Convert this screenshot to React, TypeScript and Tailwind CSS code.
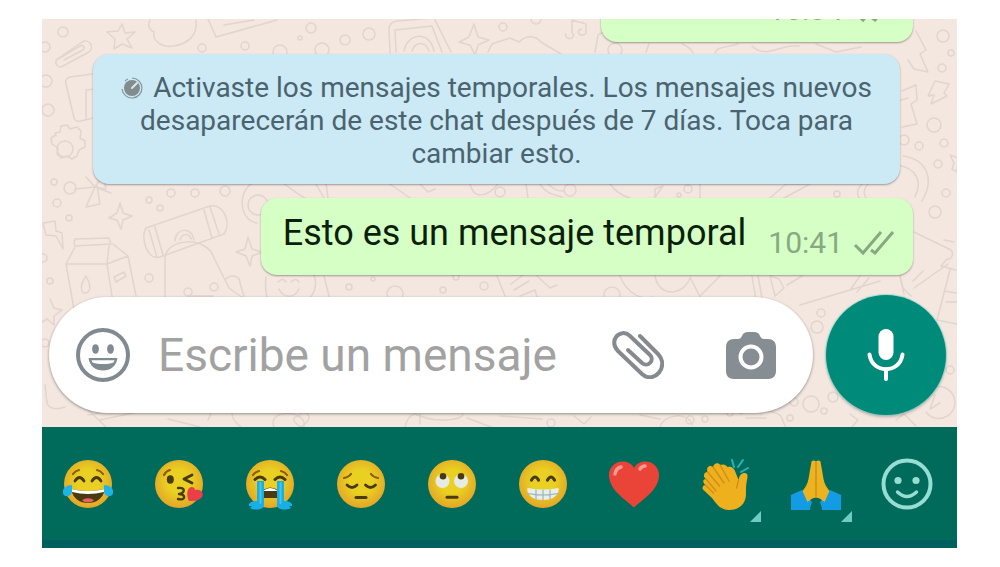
import type { ReactNode } from "react";

const roboto = "font-[Roboto,'Noto_Sans',sans-serif]";

function Wallpaper() {
  return (
    <svg
      className="absolute inset-0 h-full w-full"
      viewBox="42 19 915 408"
      preserveAspectRatio="xMidYMid slice"
      fill="none"
      stroke="#e2d4ce"
      strokeWidth="1.5"
      strokeLinecap="round"
      strokeLinejoin="round"
      aria-hidden="true"
    >
      {/* small circles */}
      {[
        [63, 32, 5], [45, 47, 5], [46, 81, 6], [48, 110, 6], [54, 182, 3], [70, 188, 6], [57, 203, 4], [69, 218, 3],
        [171, 193, 4], [149, 200, 3], [195, 193, 4], [225, 191, 5], [160, 208, 3], [43, 258, 4], [50, 281, 3],
        [149, 278, 4], [188, 292, 4], [214, 287, 4], [202, 48, 4], [245, 46, 4], [300, 38, 2], [311, 28, 5],
        [345, 40, 5], [369, 34, 6], [503, 27, 4], [536, 19, 5], [322, 50, 7], [280, 52, 7], [615, 50, 7],
        [943, 36, 6], [951, 53, 3], [942, 68, 4], [934, 125, 7], [944, 143, 4], [919, 146, 4], [904, 140, 5],
        [938, 164, 4], [946, 193, 4], [935, 212, 6], [688, 189, 4], [679, 195, 2], [837, 194, 3], [500, 192, 5],
        [570, 190, 6], [349, 287, 3], [373, 279, 2], [443, 290, 3], [484, 286, 4], [456, 277, 3], [395, 294, 8],
        [612, 295, 8], [821, 313, 4], [817, 327, 6], [45, 343, 4], [811, 404, 8], [794, 402, 4], [833, 397, 5],
        [705, 419, 3], [730, 413, 3], [824, 411, 3], [950, 370, 4], [551, 423, 4], [790, 418, 3], [690, 420, 4],
      ].map(([x, y, r]) => (
        <circle key={`${x}-${y}`} cx={x} cy={y} r={r} />
      ))}

      {/* top left: paper clip, star, mug, card */}
      <path d="M56 60l26-18c7-4 13 5 7 10L63 66c-5 3-10-3-5-7l22-13c3-2 6 2 3 4L64 60" />
      <path d="M122 24l3 9 10-1-8 7 5 9-10-4-8 5 1-10-8-7 11-1z" />
      <path d="M150 20c-3 6 0 10 4 12-2 9 8 16 20 14s24-9 22-26M208 19l8 18 61-17M224 25l30-5" />
      <path d="M100 73l-30 4c-4 1-5 4-4 7l8 34c1 3 4 4 7 3l16-4M96 89l-10 1v28" />
      <path d="M55 133l5-1 1-6 6-1 3 4 7-2 4 4-1 7 5 3 0 6-6 3-2 6-5 3-5-3-6 2-4-4 1-6-6-4-1-6 5-3z" />
      <circle cx="65" cy="149" r="8" />
      <path d="M86 177l9 10-20 2m20-2l16 6m-16-6l8-12 3 14zm0 0l-9 20 14-3-3-18" />
      <path d="M120 203l3 10 9 3-9 4-2 9-4-9-8-2 8-5zM248 237l4 12 10 3-10 4-2 10-4-10-10-4 9-3z" />

      {/* milk box */}
      <path d="M74 243l1-4 34-1 2 6-36 2zM75 247l-9 17 8 45M109 246l-2 18H66M107 264l21-8-15-12M107 264l6 38M128 256l8 40M86 276c-8 12-4 18 0 17s6-6 0-17zM114 277l10-5 2 4-10 6z" />
      <path d="M43 223l12-2 1 10 6 2 1 16-7-13-10-1z" />

      {/* scarf roll and backpack */}
      <path d="M146 228l64-22c13-3 22 16 14 28l-64 23c-13 4-20-20-14-29zM149 230l8 27M155 227l8 28M204 210l8 28M210 207l9 27" />
      <path d="M175 241c0-13 17-15 19-1M180 240c2-7 9-7 11-1M165 304V258c1-20 42-23 49 0l15 30 14 10M225 280c6-7 15-4 15 3l6 20M187 296h26" />
      <circle cx="258" cy="205" r="10" />
      <path d="M256 182c-18 4-19 38 1 41M282 182c8 6 15 12 23 16M316 184l8 14M326 183l2 15" />
      <path d="M266 277c-3 25 5 30 25 30s28-20 23-32M278 282q5-5 8 0M291 282q5-5 8 0M279 289c5 10 16 9 20 0M324 276l6 24" />

      {/* top middle: photo, sparkle, hat, notes */}
      <path d="M390 53l-1-24c0-5 3-7 8-8l37-3 17 34M396 52l-1-22 37-4 10 26M404 51c4-19 26-20 30 0M412 51c3-10 14-10 17 0" />
      <path d="M474 24l4 13 11 3-11 5-3 10-5-10-11-3 10-5zM488 52l4-8 18-6 9 4c8-8 17-6 22 0l20 12 2 7" />
      <path d="M566 34a4 3 0 1 0 6-1V20l14 4v7a4 3 0 1 1-4-2M595 52l3-17 14-8M646 52l3-8" />
      <path d="M682 44c6 2 9 5 11 9M738 44c-12 4-21 2-23 9M752 46c14 14 30-3 47 0M816 44l20 8 25-5" />

      {/* right side */}
      <path d="M916 31l10 19-6 4 8 18-14-3-6-9M935 81l14 3-5 9 3 3-16 8 3-9-6 1zM902 91l14-6 1 15-6 4 6 20-15 3M901 100l7-2" />
      <path d="M903 156c26 4 31 25 19 45M897 165c21 3 25 18 18 32M950 155l8 3-1 14-5-3 2-6z" />
      <path d="M862 184c-6 6-5 12-2 15M868 184c-5 6-4 11-2 14M770 198l16-14h24l-26 14M610 184c6 8 12 12 20 14M655 197l8-11-8 3zM700 184v14M390 184l20 14M470 184c4 16 17 13 28 0M526 184l2 14M540 184c5 8 10 10 22 13M548 184c6 5 9 7 15 7M420 184l8 8 7-3" />
      <path d="M914 232l37 18c3 3 1 10-4 9l-6 7 15 4M944 240l10 2M950 270l-13 50 20 4M944 291l12 2M946 302h11M913 281l10-10M914 288l34-24M900 276l3 12 8 8" />

      {/* strip between the bubble and the message box */}
      <path d="M497 276l8 20M511 284l12-9M514 290l15-9M520 296l15-6 2 7M537 276l13 12 7-3M620 276c8 20 24 24 32 21M655 276c4 22 28 20 35 2M690 277l10 20M720 276l-20 20M752 276l4 24 6-2-4-22M770 276l5 20 9-8-5-9zM787 285l15-9M800 305l80-24M850 290l10-14M857 292l12-14M900 276l4 18" />

      {/* lower left and lower edge */}
      <path d="M50 299l4 9 8 2-8 6v9l-7-6-5 3M45 385l2 18c2 6 10 7 18 4M80 402l26 25M88 415l60-10M100 420l38-8M168 419l32 8M190 406l22 5-4 9" />
      <path d="M232 414c1 8 6 10 9 13M274 427c-8-18 34-18 30 0M298 416c6-8 16 0 8 7l-5 4c-8-5-10-9-3-11zM405 427c2-10 8-13 10-13 22 10 47 6 48 0M420 414v10M467 418l24 9M500 416l42 3M574 416l10 8 7-7M640 415l20 4M660 427c4-14 30-15 32-2M740 414c13-7 33-4 41 2l4 10M746 418h20" />
      <path d="M932 388a16 16 0 1 1-6 24M935 395l-5 14 10-6M896 420l8-6 12 12M850 414l8 6-6 7" />
    </svg>
  );
}

function CheckMarks() {
  return (
    <svg className="h-[27px] w-[42px]" viewBox="0 0 42 27" fill="none" stroke="currentColor" strokeWidth="3" aria-hidden="true">
      <path d="M2 15l8 8L28 2M18 20l4 3L40 2" />
    </svg>
  );
}

function SentMessage({ text, time, className }: { text?: string; time: string; className?: string }) {
  return (
    <div
      className={`flex min-w-[312px] items-end justify-end rounded-2xl bg-[#d5ffc5] pt-3 pr-[18px] pb-4 pl-[22px] shadow-[0_1px_2px_rgba(0,0,0,0.35)] ${className ?? ""}`}
    >
      {text && <p className="mb-[2px] text-[36px] leading-[47px] text-[#0b1f0b]">{text}</p>}
      <div className="ml-[22px] flex items-center gap-[10px] text-[#88a881]">
        <time className="text-[30px] leading-8">{time}</time>
        <CheckMarks />
      </div>
    </div>
  );
}

function TimerIcon() {
  return (
    <svg className="mr-[10px] inline-block size-[22px] align-[-2px]" viewBox="0 0 22 22" fill="none" aria-hidden="true">
      <circle cx="11" cy="11" r="8" fill="#828b8e" />
      <path d="M11 1a10 10 0 1 1-10 11M4 4a10 10 0 0 1 3-2" stroke="#8a9599" strokeWidth="1.2" />
      <path d="M11 11l5-5" stroke="#d9e9ee" strokeWidth="2" strokeLinecap="round" />
    </svg>
  );
}

function SmileyIcon() {
  return (
    <svg className="size-[54px]" viewBox="0 0 54 54" aria-hidden="true">
      <circle cx="27" cy="27" r="25" fill="none" stroke="#828a91" strokeWidth="4" />
      <ellipse cx="19.5" cy="21" rx="3.4" ry="4.8" fill="#828a91" />
      <ellipse cx="34.5" cy="21" rx="3.4" ry="4.8" fill="#828a91" />
      <path d="M12.5 30h29c-1 8-7 12.5-14.5 12.5S13.500 38 12.500 30z" fill="#828a91" />
      <path d="M15.5 32.2h23l-1 2.200c-6 2-15 2-21 0z" fill="#fff" />
    </svg>
  );
}

function ClipIcon() {
  return (
    <svg className="h-12 w-[52px]" viewBox="0 0 52 48" fill="none" stroke="#868a8f" strokeWidth="4" strokeLinecap="round" aria-hidden="true">
      <path d="M28 5l18 18c12 12-4 31-16 20L6 20C-4 10 8-4 18 5l20 19c5 5-2 13-8 8L16 19" />
    </svg>
  );
}

function CameraIcon() {
  return (
    <svg className="h-[47px] w-[50px]" viewBox="0 0 50 47" aria-hidden="true">
      <path
        d="M8 7h4c2 0 3-1 4-3 1-3 3-4 6-4h6c3 0 5 1 6 4 1 2 2 3 4 3h4c5 0 8 3 8 8v24c0 5-3 8-8 8H8c-5 0-8-3-8-8V15c0-5 3-8 8-8z"
        fill="#868d93"
      />
      <circle cx="25" cy="25" r="10.5" fill="none" stroke="#fff" strokeWidth="4" />
    </svg>
  );
}

function MicIcon() {
  return (
    <svg className="h-[52px] w-[38px]" viewBox="0 0 38 52" aria-hidden="true">
      <rect x="11.5" y="0" width="15" height="31" rx="7.5" fill="#fff" />
      <path d="M2.5 25.5C5 45 33 45 35.5 25.500M19 40v10" fill="none" stroke="#fff" strokeWidth="4" strokeLinecap="round" />
    </svg>
  );
}

const ink = "#4a3a12";

function Emoji({ children }: { children: ReactNode }) {
  return (
    <svg className="size-[54px]" viewBox="0 0 54 54" fill="none" strokeLinecap="round" strokeLinejoin="round" aria-hidden="true">
      {children}
    </svg>
  );
}

function Face({ children }: { children: ReactNode }) {
  return (
    <Emoji>
      <circle cx="27" cy="27" r="24" fill="url(#face)" />
      {children}
    </Emoji>
  );
}

const emojis = [
  {
    name: "Cara con lágrimas de alegría",
    art: (
      <Face>
        <path d="M12 17q2-3 6-4M42 17q-2-3-6-4" stroke="#8a5f14" strokeWidth="2.2" />
        <path d="M14 24q4.5-7 9 0M31 24q4.5-7 9 0" stroke={ink} strokeWidth="2.8" />
        <path d="M10 32q17 4 34 0c-2 10-9 14-17 14s-15-4-17-14z" fill={ink} />
        <path d="M10 32q17 4 34 0l-1 3q-16 4-32 0z" fill="#fff" />
        <path d="M21 43.500c3-3 9-3 12 0-3 2.500-9 2.500-12 0z" fill="#e8606a" />
        <path d="M11 28c-5 0-10 3-9 8 1 5 8 4 9-1zM43 28c5 0 10 3 9 8-1 5-8 4-9-1z" fill="#1fb4e8" />
      </Face>
    ),
  },
  {
    name: "Cara lanzando un beso",
    art: (
      <Face>
        <path d="M12 18q2-4 6-5" stroke="#8a5f14" strokeWidth="2.2" />
        <ellipse cx="18.3" cy="22.5" rx="3.5" ry="4.2" fill={ink} />
        <path d="M40 18l-8 4 8 4" stroke={ink} strokeWidth="2.8" />
        <path d="M26 31c8-1 7 5 1 6 7 0 7 7-1 5" stroke={ink} strokeWidth="2.4" />
        <path d="M37 44c-3-6-2-13 2-14q4 0 4 3c7-2 10 5 6 8-3 3-8 3-12 3z" fill="#ea3e49" />
      </Face>
    ),
  },
  {
    name: "Cara llorando a mares",
    art: (
      <Face>
        <path d="M10 18q2-3 6-4M44 18q-2-3-6-4" stroke="#8a5f14" strokeWidth="2.2" />
        <path d="M12 22.500q5-5 10 0M32 22.500q5-5 10 0" stroke={ink} strokeWidth="3" />
        <path d="M20 41V33q7-5 15 0v8z" fill={ink} />
        <path d="M20 34q7-6 15 0z" fill="#fff" />
        <path d="M14 24h7v24c0 6-12 5-14 3l2-2H6c-1-3 3-5 8-5zM41 24h-7v24c0 6 12 5 14 3l-2-2h3c1-3-3-5-8-5z" fill="#18aee6" />
        <path d="M17.500 26v20M37.500 26v20" stroke="#42c6ef" strokeWidth="2" />
      </Face>
    ),
  },
  {
    name: "Cara desanimada",
    art: (
      <Face>
        <path d="M10 21q5-1 7-4M44 21q-5-1-7-4" stroke="#8a5f14" strokeWidth="2.2" />
        <path d="M13 28q5 5 10 0M31.500 28q5 5 10 0" stroke={ink} strokeWidth="2.8" />
        <path d="M22 40.500h10" stroke={ink} strokeWidth="3" />
      </Face>
    ),
  },
  {
    name: "Cara con ojos en blanco",
    art: (
      <Face>
        <circle cx="17.5" cy="24" r="7" fill="#e6ece4" />
        <circle cx="36" cy="24" r="7" fill="#e6ece4" />
        <circle cx="18" cy="19.3" r="3.3" fill={ink} />
        <circle cx="36" cy="19.3" r="3.3" fill={ink} />
        <path d="M22 40.300h10" stroke={ink} strokeWidth="3" />
      </Face>
    ),
  },
  {
    name: "Cara sonriendo con ojos sonrientes",
    art: (
      <Face>
        <path d="M15.500 23q3.500-6 7 0M31.500 23q3.500-6 7 0" stroke={ink} strokeWidth="3.2" />
        <path d="M12 31q15 3 30 0c2 0 1 12-15 12S10 31 12 31z" fill="#e6efec" />
        <path d="M12 36.500q15 3 30 0M20 33v9M27 33v10M34 33v9" stroke="#9fb2b6" strokeWidth="1.200" />
      </Face>
    ),
  },
  {
    name: "Corazón rojo",
    art: (
      <Emoji>
        <path d="M27 50.500C18 42 2 33 2 18 2 3 22 0 27 11 32 0 52 3 52 18c0 15-16 24-25 32.500z" fill="#ea4438" />
        <path d="M8 17q1-6 6-7M33 12q2-3 5-3" stroke="#f59a90" strokeWidth="3.500" />
      </Emoji>
    ),
  },
  {
    name: "Manos aplaudiendo",
    more: true,
    art: (
      <Emoji>
        <path d="M31 53c-8 0-12-5-17-12L5.500 33c-2-2-.5-5 2-5-3.500-3-2.500-6 .5-6-4-3-1.500-7.500 1.500-7-1.500-5 2-7.500 5.500-5 1-4 5-5 7.500-2 3-1.500 5.500 0 7 2 4-1 6 1 7.500 4l3.500 9c1-5 3-7 6-7 3.500 0 3.500 3 2.500 7-1 5-1 8-1 14 0 10-7 16-16.500 16z" fill="#efb01d" />
        <path d="M9.500 15l12 14M15 10l11 16M22 8l9 16M8 22l10 12M7.500 28l8 8M40.500 23l-2 8" stroke="#cf8f1c" strokeWidth="1.400" />
        <path d="M34 3l2 7M40 10l5-7M43 15l7-4" stroke="#24b5bd" strokeWidth="2" />
      </Emoji>
    ),
  },
  {
    name: "Manos juntas",
    more: true,
    art: (
      <Emoji>
        <path d="M2 38l11-5 10 12c-1 3-2 5-2 8H2zM52 38l-11-5-10 12c1 3 2 5 2 8h19z" fill="#149be6" />
        <path d="M22.500 4.500q2-2 4.500 0 2.500-2 4.500 0L34.500 22c1 5 3 8 6 12l-5 11-4-3q-4.500-3-9 0l-4 3-5-11c3-4 5-7 6-12z" fill="#ecb31f" />
        <path d="M27 5v34" stroke="#c98d1c" strokeWidth="1.400" />
      </Emoji>
    ),
  },
  {
    name: "Más emojis",
    art: (
      <Emoji>
        <circle cx="27" cy="27" r="23.5" stroke="#96ddd4" strokeWidth="4" />
        <circle cx="18" cy="23.5" r="3.6" fill="#96ddd4" />
        <circle cx="36" cy="23.5" r="3.6" fill="#96ddd4" />
        <path d="M17.500 35q9.500 9 19 0" stroke="#96ddd4" strokeWidth="3.400" />
      </Emoji>
    ),
  },
];

export default function App() {
  return (
    <div className={`bg-white py-[19px] pr-[43px] pl-[42px] ${roboto}`}>
      {/* gradient shared by the emoji faces */}
      <svg className="absolute size-0" aria-hidden="true">
        <defs>
          <radialGradient id="face" cx="50%" cy="45%" r="55%">
            <stop offset="0.45" stopColor="#e9d022" />
            <stop offset="1" stopColor="#e3a627" />
          </radialGradient>
        </defs>
      </svg>

      {/* Chat */}
      <main className="relative overflow-hidden bg-[#f3e7e0]">
        <Wallpaper />
        <div className="relative">
          <div className="flex justify-end pr-11">
            <SentMessage time="10:34" className="-mt-[37px]" />
          </div>

          {/* Notice */}
          <button
            type="button"
            className="mt-3 mr-[57px] ml-[51px] block w-[calc(100%-108px)] rounded-2xl bg-[#cbeaf5] px-5 pt-[17px] pb-[14px] text-center text-[28px] leading-[33px] text-[#4b636e] shadow-[0_1px_2px_rgba(0,0,0,0.35)]"
          >
            <TimerIcon />
            Activaste los mensajes temporales. Los mensajes nuevos desaparecerán de este chat después de 7 días. Toca para cambiar esto.
          </button>

          <div className="mt-[14px] flex justify-end pr-11">
            <SentMessage text="Esto es un mensaje temporal" time="10:41" />
          </div>

          {/* Message box */}
          <form className="mt-5 flex items-center gap-[13px] pr-[11px] pb-3 pl-[7px]" onSubmit={(e) => e.preventDefault()}>
            <div className="flex h-[116px] min-w-0 flex-1 items-center rounded-full bg-white pr-[37px] pl-[27px] shadow-[0_1px_3px_rgba(0,0,0,0.4)]">
              <button type="button" aria-label="Emojis">
                <SmileyIcon />
              </button>
              <input
                type="text"
                aria-label="Escribe un mensaje"
                placeholder="Escribe un mensaje"
                className="ml-7 h-16 min-w-0 flex-1 bg-transparent text-[46px] text-[#333] outline-none placeholder:text-[#a2a2a2] placeholder:opacity-100"
              />
              <button type="button" aria-label="Adjuntar" className="ml-6">
                <ClipIcon />
              </button>
              <button type="button" aria-label="Cámara" className="ml-[62px]">
                <CameraIcon />
              </button>
            </div>
            <button
              type="button"
              aria-label="Grabar mensaje de voz"
              className="flex size-[120px] shrink-0 items-center justify-center rounded-full bg-[#008a7a] shadow-[0_0_1px_1px_rgba(120,210,195,0.6),0_2px_3px_rgba(0,0,0,0.25)]"
            >
              <MicIcon />
            </button>
          </form>
        </div>
      </main>

      {/* Keyboard emoji row */}
      <footer className="grid h-[121px] grid-cols-10 border-b-8 border-[#006060] bg-[#006a5b] pr-1">
        {emojis.map((emoji) => (
          <button key={emoji.name} type="button" aria-label={emoji.name} className="relative flex items-center justify-center">
            {emoji.art}
            {emoji.more && (
              <svg className="absolute right-[10px] bottom-[18px] size-[11px]" viewBox="0 0 11 11" aria-hidden="true">
                <path d="M11 0v11H0z" fill="#6fccc2" />
              </svg>
            )}
          </button>
        ))}
      </footer>
    </div>
  );
}
